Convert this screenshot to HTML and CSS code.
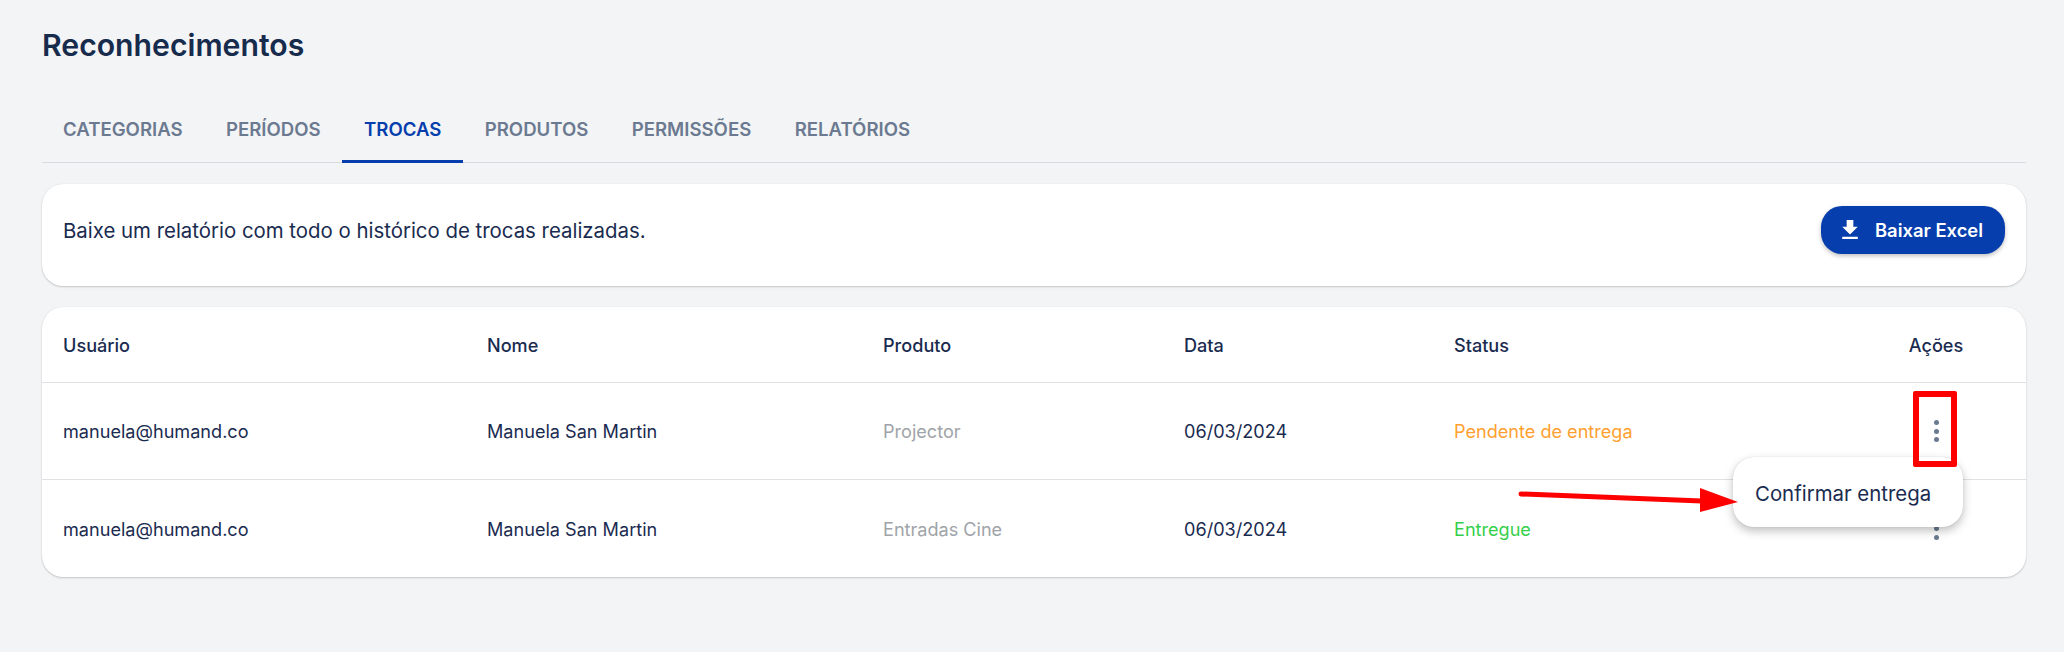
FILE: index.html
```html
<!DOCTYPE html>
<html lang="pt">
<head>
<meta charset="utf-8">
<title>Reconhecimentos</title>
<link rel="stylesheet" href="styles.css">
</head>
<body>
<main class="page">
  <h1 class="title">Reconhecimentos</h1>
  <nav class="tabs">
    <a class="tab">Categorias</a>
    <a class="tab">Períodos</a>
    <a class="tab active">Trocas</a>
    <a class="tab">Produtos</a>
    <a class="tab">Permissões</a>
    <a class="tab">Relatórios</a>
  </nav>
  <section class="card banner">
    <p class="banner-text">Baixe um relatório com todo o histórico de trocas realizadas.</p>
    <button class="btn">
      <svg class="btn-icon" viewBox="5 3 14 18" width="16" height="20" fill="#fff"><path d="M19 9h-4V3H9v6H5l7 7 7-7zM5 18v2h14v-2H5z"/></svg>
      <span>Baixar Excel</span>
    </button>
  </section>
  <section class="card table">
    <div class="row head">
      <div>Usuário</div><div>Nome</div><div>Produto</div><div>Data</div><div>Status</div><div class="actions">Ações</div>
    </div>
    <div class="row">
      <div>manuela@humand.co</div><div>Manuela San Martin</div><div class="muted">Projector</div><div>06/03/2024</div><div class="pending">Pendente de entrega</div>
      <div class="actions"><span class="dots"><i></i><i></i><i></i></span></div>
    </div>
    <div class="row last">
      <div>manuela@humand.co</div><div>Manuela San Martin</div><div class="muted">Entradas Cine</div><div>06/03/2024</div><div class="done">Entregue</div>
      <div class="actions"><span class="dots"><i></i><i></i><i></i></span></div>
    </div>
    <div class="menu">Confirmar entrega</div>
    <div class="highlight"></div>
    <svg class="arrow" viewBox="0 0 222 28" width="222" height="28">
      <path d="M3 6 L184 13" stroke="#fe0000" stroke-width="5" stroke-linecap="round" fill="none"/>
      <path d="M182 0 L220 14 L182 24 Z" fill="#fe0000"/>
    </svg>
  </section>
</main>
</body>
</html>
```
FILE: styles.css
```css
* { box-sizing: border-box; }
html, body { margin: 0; padding: 0; }
body {
  background: #f3f4f6;
  color: #1a2b50;
  font-family: Inter, "Liberation Sans", sans-serif;
  height: 652px;
  overflow: hidden;
}
.page { padding: 27px 38px 0 42px; }
.title {
  margin: 0;
  font-size: 30.2px;
  line-height: 36px;
  font-weight: 600;
  color: #172b4d;
}
.tabs {
  display: flex;
  margin-top: 38px;
  height: 62px;
  border-bottom: 1px solid #d9dbde;
}
.tab {
  padding: 0 21.7px;
  font-size: 18.6px;
  line-height: 56px;
  font-weight: 600;
  text-transform: uppercase;
  color: #6b7a90;
  height: 62px;
  border-bottom: 3px solid transparent;
  margin-bottom: -1px;
}
.tab:first-child { padding-left: 21px; }
.tab.active {
  color: #063ead;
  border-bottom-color: #063ead;
}
.card {
  background: #fff;
  border-radius: 21px;
  box-shadow: 0 1px 2px rgba(0,0,0,.18), 0 0 1px rgba(0,0,0,.12);
}
.banner {
  margin-top: 21px;
  height: 102px;
  padding: 0 21px 10px;
  display: flex;
  align-items: center;
  justify-content: space-between;
}
.banner-text { margin: 0; font-size: 20.4px; }
.btn {
  display: flex;
  align-items: center;
  gap: 17px;
  width: 184px;
  height: 48px;
  padding: 0 0 0 21px;
  border: 0;
  border-radius: 21px;
  background: #063ead;
  color: #fff;
  font: 600 18.4px Inter, sans-serif;
  box-shadow: 0 2px 4px rgba(0,0,0,.25);
}
.table {
  position: relative;
  margin-top: 21px;
  height: 270px;
}
.row {
  display: grid;
  grid-template-columns: 424px 396px 301px 270px 413px 180px;
  align-items: center;
  height: 97px;
  border-bottom: 1px solid #dfe1e4;
  font-size: 18.1px;
  line-height: 22px;
}
.row > div { padding-left: 21px; }
.row.head { height: 76px; font-weight: 500; }
.row.last { border-bottom: 0; }
.row > .actions { padding: 0; display: flex; justify-content: center; }
.muted { color: #a0a4a8; }
.pending { color: #ffa030; }
.done { color: #35d04a; }
.dots { display: flex; flex-direction: column; gap: 3.5px; }
.dots i { width: 5px; height: 5px; border-radius: 50%; background: #6b7a90; }
.menu {
  position: absolute;
  left: 1691px;
  top: 150px;
  width: 230px;
  height: 70px;
  padding-left: 22px;
  border-radius: 21px;
  background: #fff;
  font-size: 20.4px;
  line-height: 74px;
  box-shadow: 0 4px 10px rgba(0,0,0,.25), 0 0 1px rgba(0,0,0,.2);
}
.highlight {
  position: absolute;
  left: 1871px;
  top: 84px;
  width: 44px;
  height: 76px;
  border: 6px solid #fe0000;
  border-radius: 2px;
}
.arrow {
  position: absolute;
  left: 1476px;
  top: 181px;
}
```
